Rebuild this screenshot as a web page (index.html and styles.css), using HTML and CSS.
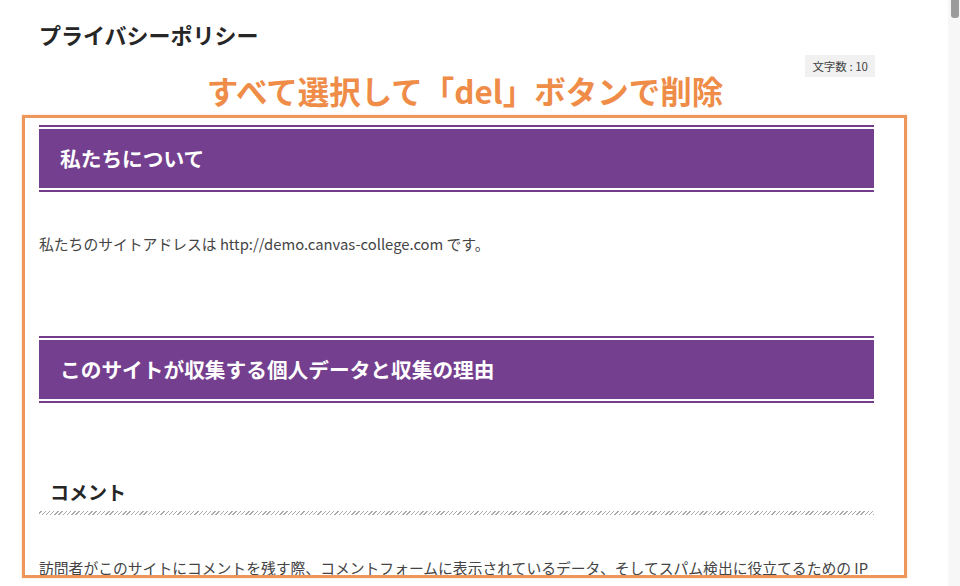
FILE: index.html
```html
<!DOCTYPE html>
<html lang="ja">
<head>
  <meta charset="UTF-8">
  <meta name="viewport" content="width=device-width, initial-scale=1.0">
  <link rel="stylesheet" href="styles.css">
  <title>プライバシーポリシー</title>
</head>
<body>
  <div class="screen">
    <div class="editor">
      <!-- Page title -->
      <h1 class="page-title">プライバシーポリシー</h1>
      <div class="meta-row">
        <span class="char-count">文字数 : 10</span>
      </div>

      <!-- Policy body -->
      <h2 class="section-head"><span>私たちについて</span></h2>
      <p class="body-text">私たちのサイトアドレスは http://demo.canvas-college.com です。</p>

      <h2 class="section-head second"><span>このサイトが収集する個人データと収集の理由</span></h2>

      <h3 class="sub-head">コメント</h3>
      <p class="body-text last">訪問者がこのサイトにコメントを残す際、コメントフォームに表示されているデータ、そしてスパム検出に役立てるための IP</p>

      <!-- Annotation drawn over the screenshot -->
      <div class="note-text">すべて選択して「del」ボタンで削除</div>
      <div class="note-box"></div>
    </div>

    <!-- Fake scrollbar -->
    <div class="scrollbar">
      <div class="thumb"></div>
    </div>
  </div>
</body>
</html>
```

FILE: styles.css
```css
body {
  margin: 0;
  padding: 0;
  font-family: "Noto Sans CJK JP", "Noto Sans", sans-serif;
  color: #333;
  background: #fff;
  overflow: hidden;
}

.screen {
  display: flex;
  width: 960px;
  height: 586px;
  overflow: hidden;
}

.editor {
  position: relative;
  width: 835px;
  padding-left: 39px;
  flex: 0 0 auto;
}

.page-title {
  margin: 19px 0 0;
  font-size: 22px;
  line-height: 30px;
  font-weight: 700;
  color: #262626;
}

.meta-row {
  display: flex;
  justify-content: flex-end;
  margin-top: 6px;
  margin-right: -1px;
}

.char-count {
  background: #f1f1f1;
  font-size: 11.5px;
  line-height: 22px;
  padding: 0 7px;
  color: #444;
}

.section-head {
  margin: 48px 0 0;
  border-top: 2px solid #733d8c;
  border-bottom: 2px solid #733d8c;
  padding: 2px 0;
}

.section-head span {
  display: block;
  background: #743f8f;
  color: #fff;
  font-size: 20.7px;
  font-weight: 700;
  line-height: 59px;
  padding: 0 21px;
}

.section-head.second {
  margin-top: 79px;
}

.body-text {
  margin: 39px 0 0;
  font-size: 14.8px;
  line-height: 26px;
  color: #444;
  white-space: nowrap;
}

.sub-head {
  margin: 74px 0 0;
  padding: 0 0 8px 11px;
  font-size: 19px;
  line-height: 30px;
  font-weight: 700;
  color: #262626;
  background: repeating-linear-gradient(-45deg, #aaa 0 1px, transparent 1px 3px) left bottom / 100% 4px no-repeat;
}

.body-text.last {
  margin-top: 40px;
}

.note-text {
  position: absolute;
  top: 69px;
  left: 185px;
  width: 560px;
  text-align: center;
  font-size: 31.5px;
  line-height: 42px;
  font-weight: 700;
  color: #ee8c48;
  white-space: nowrap;
}

.note-box {
  position: absolute;
  top: 115px;
  left: 22px;
  width: 879px;
  height: 457px;
  border: 3px solid #ee975a;
  box-shadow: 0 0 2px rgba(238, 151, 90, 0.4);
}

.scrollbar {
  margin-left: auto;
  width: 12px;
  background: #f7f7f7;
  position: relative;
}

.thumb {
  margin: 0 1px 0 3px;
  height: 18px;
  background: #9b9b9b;
  border-radius: 0 0 3px 3px;
}
```
